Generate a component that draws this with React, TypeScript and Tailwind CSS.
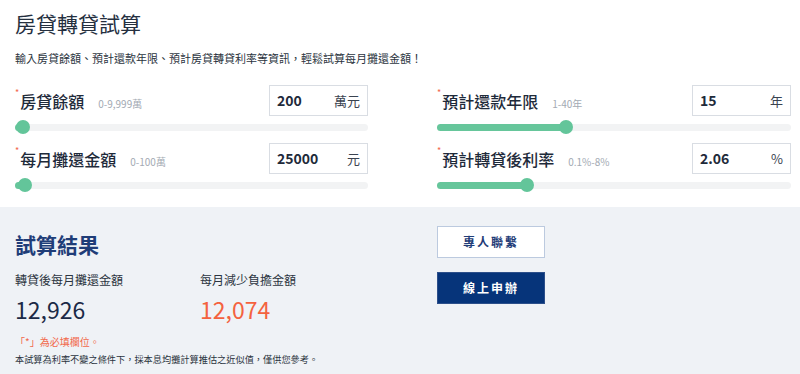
import React from "react";

const font = { fontFamily: '"Noto Sans CJK TC", "Noto Sans", sans-serif' };

function Slider({ pos }: { pos: number }) {
  return (
    <div className="relative h-[14px] mt-[4px] flex items-center">
      <div className="w-full h-[7px] rounded-full bg-[#f2f3f4] relative">
        <div className="absolute left-0 top-0 h-[7px] rounded-full bg-[#66c69b]" style={{ width: pos }} />
      </div>
      <div
        className="absolute top-0 w-[14px] h-[14px] rounded-full bg-[#63c59a]"
        style={{ left: pos - 7 }}
      />
    </div>
  );
}

function Field({
  label,
  hint,
  value,
  unit,
  pos,
  first,
}: {
  label: string;
  hint: string;
  value: string;
  unit: string;
  pos: number;
  first?: boolean;
}) {
  return (
    <div className={first ? "" : "mt-[9px]"}>
      <div className="flex items-center justify-between h-[31px]">
        <div className="flex items-baseline">
          <span className="text-[#f2684a] text-[9px] leading-none self-start -mt-[2px] mr-[1px]">*</span>
          <span className="text-[16px] leading-[22px] font-medium text-[#1e2a3a]">{label}</span>
          <span className="ml-[14px] text-[10px] text-[#a3aab3]">{hint}</span>
        </div>
        <div className="w-[99px] h-[31px] border border-[#d9dde3] flex items-center justify-between px-[7px]">
          <span className="text-[14px] font-bold text-[#1e2a3a]">{value}</span>
          <span className="text-[13px] text-[#3a4350]">{unit}</span>
        </div>
      </div>
      <Slider pos={pos} />
    </div>
  );
}

export default function App() {
  return (
    <div className="w-[800px] h-[374px] overflow-hidden bg-white" style={font}>
      <div className="pl-[15px] pr-[9px] pt-[8px] pb-[15px]">
        <h1 className="text-[21px] leading-[30px] text-[#25303f] font-normal">房貸轉貸試算</h1>
        <p className="mt-[12px] text-[11px] leading-[16px] text-[#2b3440]">
          輸入房貸餘額、預計還款年限、預計房貸轉貸利率等資訊，輕鬆試算每月攤還金額！
        </p>
        <div className="mt-[19px] flex justify-between">
          <div className="w-[353px]">
            <Field first label="房貸餘額" hint="0-9,999萬" value="200" unit="萬元" pos={8} />
            <Field label="每月攤還金額" hint="0-100萬" value="25000" unit="元" pos={10} />
          </div>
          <div className="w-[354px]">
            <Field first label="預計還款年限" hint="1-40年" value="15" unit="年" pos={129} />
            <Field label="預計轉貸後利率" hint="0.1%-8%" value="2.06" unit="%" pos={90} />
          </div>
        </div>
      </div>
      <div className="bg-[#eff2f6] h-[200px] flex">
        <div className="w-[437px] pl-[15px] pt-[22px]">
          <h2 className="text-[21px] leading-[30px] font-bold text-[#1f3d78]">試算結果</h2>
          <div className="mt-[12px] flex">
            <div className="w-[185px]">
              <div className="text-[12px] leading-[18px] text-[#2b3440]">轉貸後每月攤還金額</div>
              <div className="mt-[5px] text-[23px] leading-[30px] text-[#1b2a47]">12,926</div>
            </div>
            <div>
              <div className="text-[12px] leading-[18px] text-[#2b3440]">每月減少負擔金額</div>
              <div className="mt-[5px] text-[23px] leading-[30px] text-[#f4623f]">12,074</div>
            </div>
          </div>
          <div className="mt-[11px] text-[10px] leading-[14px] text-[#f2684a]">「*」為必填欄位。</div>
          <div className="mt-[3px] text-[9.2px] leading-[14px] text-[#2b3440]">
            本試算為利率不變之條件下，採本息均攤計算推估之近似值，僅供您參考。
          </div>
        </div>
        <div className="pt-[19px] flex flex-col gap-[14px]">
          <button className="w-[108px] h-[32px] bg-white border-[1.5px] border-[#bccadf] text-[12px] font-bold tracking-[2px] text-[#1f3d78]">
            專人聯繫
          </button>
          <button className="w-[108px] h-[32px] bg-[#06347a] border border-[#2c4f8a] text-[12px] font-bold tracking-[2px] text-white">
            線上申辦
          </button>
        </div>
      </div>
    </div>
  );
}
